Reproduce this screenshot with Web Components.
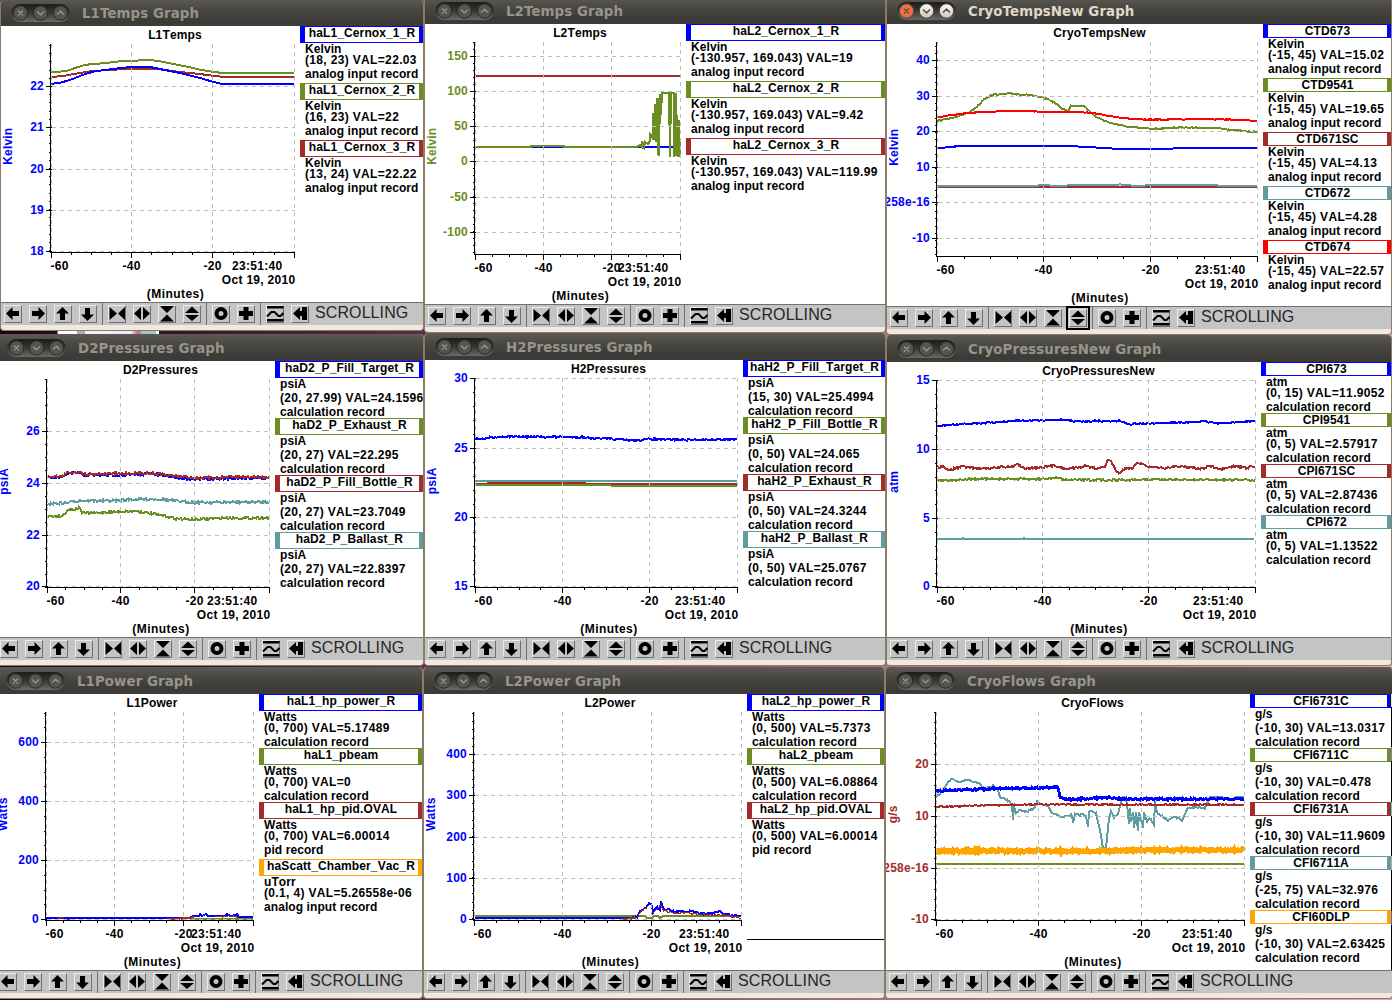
<!DOCTYPE html>
<html lang="en">
<head>
<meta charset="utf-8">
<title>Strip charts</title>
<style>
  html, body {
    margin: 0;
    height: 1000px;
    overflow: hidden;
    font: bold 12px "Liberation Sans", Arial, sans-serif;
    font-kerning: none;
    color: #000;
  }
</style>
</head>
<body>
<graph-desktop></graph-desktop>

<script>
// window buttons in the title bar
const controlsTmpl = document.createElement("template");
controlsTmpl.innerHTML = `
  <style>
    :host { display: block; width: 59px; height: 18px; }
    svg { display: block; }
    .c { fill: #55544e; stroke: #2b2a27; }
    .g { fill: none; stroke: #98968c; stroke-width: 1.3; }
    :host([active]) .c { fill: url(#lit); stroke: #4a4843; }
    :host([active]) .c.x { fill: #f0703f; }
    :host([active]) .g { stroke: #55534c; stroke-width: 1.6; }
  </style>
  <svg width="59" height="18" viewBox="0 0 59 18">
    <defs>
      <linearGradient id="pill" x1="0" y1="0" x2="0" y2="1">
        <stop offset="0" stop-color="#1d1c1a"/>
        <stop offset=".5" stop-color="#393834"/>
        <stop offset="1" stop-color="#6b6a64"/>
      </linearGradient>
      <linearGradient id="lit" x1="0" y1="0" x2="0" y2="1">
        <stop offset="0" stop-color="#fffdf8"/>
        <stop offset="1" stop-color="#c9c5ba"/>
      </linearGradient>
    </defs>
    <rect width="59" height="18" rx="9" fill="url(#pill)"/>
    <circle class="c x" cx="9.5" cy="9" r="7.2"/>
    <circle class="c" cx="29.5" cy="9" r="7.2"/>
    <circle class="c" cx="49.5" cy="9" r="7.2"/>
    <path class="g" d="M7 6.5l5 5M12 6.5l-5 5M26 7.5l3.5 3.3 3.5-3.3M46 10.5l3.5-3.3 3.5 3.3"/>
  </svg>
`;
class WindowControls extends HTMLElement {
  constructor() {
    super();
    this.attachShadow({ mode: "open" }).appendChild(controlsTmpl.content.cloneNode(true));
  }
}
customElements.define("window-controls", WindowControls);

// window frame: title bar, body and tool bar
const windowTmpl = document.createElement("template");
windowTmpl.innerHTML = `
  <style>
    :host {
      position: absolute;
      box-sizing: border-box;
      display: flex;
      flex-direction: column;
      border: solid #8b7b67;
      border-width: 0 1px 1px;
      border-radius: 4px;
      overflow: hidden;
      background: #efe9e0;
    }
    header {
      flex: none;
      display: flex;
      align-items: center;
      height: 27px;
      padding-left: 10px;
      gap: 12px;
      background: linear-gradient(#5b5a53, #4a4944 35%, #3c3b37 80%);
      color: #98948a;
      font: bold 13.33px "DejaVu Sans", sans-serif;
      letter-spacing: .1px;
      white-space: nowrap;
    }
    header span { line-height: 27px; padding-top: 2px; }
    :host([active]) header { color: #dfd8c8; }
    .body { display: flex; background: #fff; overflow: hidden; }
    tool-bar { flex: none; margin-bottom: 5px; }
  </style>
  <header><window-controls></window-controls><span><slot name="title"></slot></span></header>
  <div class="body"><slot></slot></div>
  <tool-bar>SCROLLING</tool-bar>
`;
class GraphWindow extends HTMLElement {
  constructor() {
    super();
    this.attachShadow({ mode: "open" }).appendChild(windowTmpl.content.cloneNode(true));
  }
  connectedCallback() {
    if (this.hasAttribute("active")) {
      this.shadowRoot.querySelector("window-controls").setAttribute("active", "");
    }
    if (this.hasAttribute("focus")) {
      this.shadowRoot.querySelector("tool-bar").setAttribute("focus", this.getAttribute("focus"));
    }
    this.shadowRoot.querySelector(".body").style.height = this.getAttribute("body") + "px";
  }
}

// tool bar
const icons = {
  left: '<path d="M2 8.5L8.500 2v4H15v5H8.500v4z"/>',
  right: '<path d="M16 8.500L9.500 2v4H3v5h6.500v4z"/>',
  up: '<path d="M8.500 2L15 8.500h-4V15H6V8.500H2z"/>',
  down: '<path d="M8.500 16L15 9.500h-4V3H6v6.500H2z"/>',
  shrinkX: '<path d="M1.500 2L9 8.500 1.500 15zM17 2L10 8.500 17 15z"/>',
  growX: '<path d="M1 8.500L8 2v13zM17 8.500L10 2v13z"/>',
  shrinkY: '<path d="M2 1h14L9 8zM2 16.500h14L9 9.500z"/>',
  growY: '<path d="M9 1.500L16 8H2zM9 16L16 10H2z"/>',
  ring: '<circle cx="9" cy="8.500" r="4.500" fill="none" stroke="#000" stroke-width="4"/>',
  plus: '<path d="M6.500 2h5v4H16v5h-4.500v4h-5v-4H2V6h4.500z"/>',
  wave: '<path d="M1 1h16.500v2.500H1zM1 14h16.500v2.500H1z"/><path d="M1 11.500L5.500 7h3l4 4h2L17.500 8" fill="none" stroke="#000" stroke-width="2"/>',
  end: '<path d="M2 8.500L9 2v4h2V2h5v13h-5v-4H9v4z"/>'
};
class ToolButton extends HTMLElement {
  constructor() {
    super();
    this.attachShadow({ mode: "open" });
  }
  connectedCallback() {
    this.shadowRoot.innerHTML = `
      <style>
        :host {
          display: block;
          box-sizing: border-box;
          width: 18px;
          height: 18px;
          border: 1px solid;
          border-color: #ececec #707070 #707070 #ececec;
          background: #c4c4c4;
        }
        :host([focused]) { outline: 2px solid #000; outline-offset: 1px; }
        svg { display: block; margin: -1px; }
      </style>
      <svg width="18" height="18" viewBox="0 0 18 18">${icons[this.getAttribute("icon")]}</svg>`;
  }
}
customElements.define("tool-button", ToolButton);

class ToolBar extends HTMLElement {
  static observedAttributes = ["focus"];
  constructor() {
    super();
    const groups = [
      ["left", "right", "up", "down"],
      ["shrinkX", "growX", "shrinkY", "growY"],
      ["ring", "plus"],
      ["wave", "end"]
    ];
    this.attachShadow({ mode: "open" }).innerHTML = `
      <style>
        :host {
          display: flex;
          box-sizing: border-box;
          height: 23px;
          border-top: 1px solid #707070;
          background: #c4c4c4;
          white-space: nowrap;
        }
        .group {
          display: flex;
          gap: 7px;
          padding: 2px 5px 0 4px;
          border-right: 1px solid #707070;
        }
        .group:first-of-type { padding-left: 3px; }
        .group + .group { padding-left: 5px; }
        .group.last { border: 0; padding-right: 6px; }
        .label {
          font: 16px/20px "Liberation Sans", Arial, sans-serif;
          letter-spacing: .1px;
          color: #262626;
        }
      </style>
      ${groups.map((g, i) => `<div class="group${i == 3 ? " last" : ""}">${
        g.map(n => `<tool-button icon="${n}"></tool-button>`).join("")}</div>`).join("")}
      <div class="label"><slot></slot></div>`;
  }
  attributeChangedCallback(name, old, value) {
    this.shadowRoot.querySelector(`[icon=${value}]`).setAttribute("focused", "");
  }
}
customElements.define("tool-bar", ToolBar);
customElements.define("graph-window", GraphWindow);

// one signal of the legend
class PvEntry extends HTMLElement {
  constructor() {
    super();
    this.attachShadow({ mode: "open" });
  }
  connectedCallback() {
    const [name, ...lines] = this.signal;
    // a row is three pixels taller when its text goes below the baseline
    const low = s => /[_gpy(/]/.test(s);
    this.shadowRoot.innerHTML = `
      <style>
        :host { display: block; padding-bottom: 1px; white-space: nowrap; }
        .name {
          box-sizing: border-box;
          border: solid var(--pen);
          border-width: 1px 4px 1px 5px;
          height: 14px;
          line-height: 12px;
          letter-spacing: .12px;
          display: flex;
          justify-content: center;
        }
        .name.low { height: 17px; }
        .line { height: 11px; line-height: 12px; padding-left: 5px; letter-spacing: .08px; }
        .line.low { height: 14px; }
        .line.value { letter-spacing: .34px; }
      </style>
      <div class="name ${low(name) ? "low" : ""}">${name}</div>
      ${lines.map((l, i) => `<div class="line ${low(l) ? "low" : ""} ${i == 1 ? "value" : ""}">${l}</div>`).join("")}`;
  }
}
customElements.define("pv-entry", PvEntry);

class PvLegend extends HTMLElement {
  constructor() {
    super();
    this.attachShadow({ mode: "open" }).innerHTML = `
      <style>
        :host { display: block; flex: 1; min-width: 0; overflow: hidden; }
        .rule { height: 80px; border-bottom: 1px solid #000; display: none; }
        :host([rule]) .rule { display: block; }
        :host([edge]) {
          border-right: 1px solid #000;
          border-image: linear-gradient(#ffff00 14px, #000 14px 54px, #9370db 54px 68px, #000 68px 108px,
            #40e0d0 108px 122px, #000 122px 162px, #d2a0a0 162px 176px, #000 176px 216px, #4169e1 216px 230px, #000 230px) 1;
        }
      </style>
      <slot></slot><div class="rule"></div>`;
  }
}
customElements.define("pv-legend", PvLegend);

// strip chart
let seed = 7;
function rnd() {
  seed = (seed * 16807) % 2147483647;
  return seed / 2147483647 - 0.5;
}
// walk along the key points one pixel at a time, adding the noise
function trace(pts, noise) {
  const p = pts.trim().split(/\s+/).map(s => s.split(",").map(Number));
  if (!noise) return p.map(q => q.join()).join(" ");
  const out = [];
  for (let i = 0; i < p.length - 1; i++) {
    const [x0, y0] = p[i], [x1, y1] = p[i + 1];
    const n = Math.max(1, Math.round(Math.abs(x1 - x0)));
    for (let k = 0; k < n; k++) {
      const y = y0 + (y1 - y0) * k / n + rnd() * noise * 2;
      out.push((x0 + (x1 - x0) * k / n).toFixed(1) + "," + y.toFixed(1));
    }
  }
  out.push(p[p.length - 1].join());
  return out.join(" ");
}

class StripChart extends HTMLElement {
  constructor() {
    super();
    this.attachShadow({ mode: "open" });
  }
  connectedCallback() {
    const c = this.chart;
    const [vx, vy, vw, vh] = c.view;
    const [x0, x1, x2, x3] = c.xs;
    const { top, base } = c;
    let grid = "", axes = "", text = "";

    c.xs.forEach((x, i) => {
      grid += `<path d="M${x} ${top}V${base}"/>`;
      axes += `<path d="M${x} ${base}v5"/>`;
      if (i < 3) {
        for (let k = 1; k < 4; k++) {
          axes += `<path d="M${Math.floor(x + (c.xs[i + 1] - x) * k / 4) + .5} ${base}v2.500"/>`;
        }
      }
    });
    const step = (c.ys[1][1] - c.ys[0][1]) / c.minor;
    for (let y = c.ys[0][1]; y >= top; y -= step) axes += `<path d="M${x0 - 3} ${Math.floor(y) + .5}h2.500"/>`;
    for (let y = c.ys[0][1]; y <= base; y += step) axes += `<path d="M${x0 - 3} ${Math.floor(y) + .5}h2.500"/>`;
    c.ys.forEach(([label, y]) => {
      grid += `<path d="M${x0} ${y}H${x3}"/>`;
      axes += `<path d="M${x0 - 6} ${y}h6"/>`;
      text += `<text class="tick" x="${x0 - 7.5}" y="${y + 3.5}" text-anchor="end" fill="${c.pen}">${label}</text>`;
    });
    const mid = (x0 + x3) / 2 + 2.500;
    const lines = c.traces.map(([pen, pts, noise, w]) =>
      `<polyline points="${trace(pts, noise)}" stroke="${pen}" stroke-width="${w || 2}"/>`).join("");

    this.shadowRoot.innerHTML = `
      <style>
        :host { display: block; flex: none; width: ${vw}px; height: ${vh}px; }
        svg { display: block; overflow: hidden; }
        path, polyline { fill: none; shape-rendering: crispEdges; }
        .grid { stroke: #bebebe; stroke-dasharray: 4 4; }
        .axes { stroke: #000; }
        text { white-space: pre; letter-spacing: .3px; }
        .title { letter-spacing: .15px; }
        .tick { letter-spacing: .25px; }
        .unit { letter-spacing: .2px; }
      </style>
      <svg width="${vw}" height="${vh}" viewBox="${c.view.join(" ")}">
        ${lines}
        <g class="grid">${grid}</g>
        <g class="axes"><path d="M${x0 - 1} ${top}V${base + .5}M${x0 - 1} ${base}H${x3 + .5}"/>${axes}</g>
        ${text}
        <text class="title" x="${mid - .5}" y="${vy + 13}" text-anchor="middle">${c.title}</text>
        <text x="${x0 - 1}" y="${base + 17.5}">-60</text>
        <text x="${x1}" y="${base + 17.5}" text-anchor="middle">-40</text>
        <text x="${x2}" y="${base + 17.5}" text-anchor="middle">-20</text>
        <text x="${x3 - 12}" y="${base + 17.5}" text-anchor="end">23:51:40</text>
        <text x="${x3 + 1}" y="${base + 31.5}" text-anchor="end">Oct 19, 2010</text>
        <text x="${mid}" y="${base + 45.5}" text-anchor="middle" style="letter-spacing:.45px">(Minutes)</text>
        <text class="unit" transform="translate(${vx + 11} ${(top + base) / 2 - 2}) rotate(-90)" text-anchor="middle" fill="${c.pen}">${c.unit}</text>
      </svg>`;
  }
}
customElements.define("strip-chart", StripChart);

// data
const BLUE = "#0000ff", GREEN = "#6b8e23", BROWN = "#a52a2a", TEAL = "#5f9ea0", RED = "#ff0000", ORANGE = "#ffa500";
const AI = "analog input record", CALC = "calculation record";

const graphs = [
  {
    title: "L1Temps", box: [0, -1, 424], body: 276, split: 300, unit: "Kelvin", pen: BLUE,
    xs: [51.5, 131.5, 212.5, 294.5], top: 44, base: 252.5, minor: 5,
    ys: [["22", 86.5], ["21", 127.5], ["20", 169.5], ["19", 210.5], ["18", 251.5]],
    traces: [
      [GREEN, "51,72.3 67,71 75,68 85,65 92,64 103,63.3 120,61.3 131,60.7 145,60.3 150,60 160,61.3 170,63.3 180,65.3 190,67.3 200,69.7 210,71.3 222,73 294,73"],
      [BROWN, "51,77 63,76 78,73.3 92,71 105,70.3 120,69.3 131,68.7 155,68.7 170,70.7 180,72 190,73 200,74 212,75.7 225,77 294,77"],
      [BLUE, "51,84 60,82.7 70,80 75,78 85,74 95,71.3 105,70 115,68.7 131,67 150,67 160,69 170,71 180,73 190,75.5 200,78 210,81 222,84 294,84"]
    ],
    signals: [
      [BLUE, "haL1_Cernox_1_R", "Kelvin", "(18, 23) VAL=22.03", AI],
      [GREEN, "haL1_Cernox_2_R", "Kelvin", "(16, 23) VAL=22", AI],
      [BROWN, "haL1_Cernox_3_R", "Kelvin", "(13, 24) VAL=22.22", AI]
    ]
  },
  {
    title: "L2Temps", box: [424, -3, 462], body: 280, split: 686, unit: "Kelvin", pen: GREEN,
    xs: [475.5, 543.5, 611.5, 680.5], top: 42, base: 254.5, minor: 5,
    ys: [["150", 56.5], ["100", 91.5], ["50", 126.5], ["0", 161.5], ["-50", 197.5], ["-100", 232.5]],
    traces: [
      [BROWN, "475,76 680,76"],
      [BLUE, "531,147 564,147"],
      [BLUE, "637,147 677,147"],
      [GREEN, "475,147 531,147 531,146 564,146 564,147 637,147 640,145 642,147 642,141 644,147 645,142 648,144 650,141 650,134 652,136 653,140 653,113 654,140 655,104 656,142 657,98 658,155 659,98 659,156 660,94 661,115 662,93 669,93 670,157 671,93 674,93 674,157 676,93 676,156 677,115 678,157 679,120 680,157"]
    ],
    signals: [
      [BLUE, "haL2_Cernox_1_R", "Kelvin", "(-130.957, 169.043) VAL=19", AI],
      [GREEN, "haL2_Cernox_2_R", "Kelvin", "(-130.957, 169.043) VAL=9.42", AI],
      [BROWN, "haL2_Cernox_3_R", "Kelvin", "(-130.957, 169.043) VAL=119.99", AI]
    ]
  },
  {
    title: "CryoTempsNew", box: [886, -3, 506], body: 282, split: 1263, unit: "Kelvin", pen: BLUE, active: true, focus: "growY",
    xs: [937.5, 1043.5, 1150.5, 1257.5], top: 42, base: 256.5, minor: 5,
    ys: [["40", 60.5], ["30", 96.5], ["20", 131.5], ["10", 167.5], ["258e-16", 202.5], ["-10", 238.5]],
    traces: [
      [BLUE, "937,148 950,147 960,146 1065,146 1090,147 1120,149 1160,149 1175,148.500 1190,148 1257,148", .25],
      [GREEN, "937,121 950,118.5 962,115.3 970,112 978,105.7 984,99 990,96 995,94.3 1005,94 1009,93 1015,94.3 1030,95 1040,97.3 1048,99 1055,103 1062,108.7 1068,111 1071,105.7 1080,106 1085,106.3 1089,111 1095,116 1105,121 1115,124 1125,126.3 1140,128 1155,128.7 1180,127.3 1215,128 1235,130 1250,131.7 1257,132", .5],
      [BROWN, "937,187 1257,187"],
      [TEAL, "937,186 1038,186 1039,185 1060,186 1075,185 1118,185 1120,184 1122,185 1140,186 1150,185 1215,185 1220,186 1257,186"],
      [RED, "937,117.3 950,115.3 965,113.3 980,112 1005,111 1025,111 1050,112 1085,112.3 1100,114.3 1115,117 1130,118.7 1150,119.7 1175,119.3 1210,119.3 1240,119.7 1257,121", .25]
    ],
    signals: [
      [BLUE, "CTD673", "Kelvin", "(-15, 45) VAL=15.02", AI],
      [GREEN, "CTD9541", "Kelvin", "(-15, 45) VAL=19.65", AI],
      [BROWN, "CTD671SC", "Kelvin", "(-15, 45) VAL=4.13", AI],
      [TEAL, "CTD672", "Kelvin", "(-15, 45) VAL=4.28", AI],
      [RED, "CTD674", "Kelvin", "(-15, 45) VAL=22.57", AI]
    ]
  },
  {
    title: "D2Pressures", box: [-4, 334, 428], body: 276, split: 275, unit: "psiA", pen: BLUE,
    xs: [47.5, 120.5, 194.5, 269.5], top: 379, base: 587.5, minor: 4,
    ys: [["26", 431.5], ["24", 483.5], ["22", 535.5], ["20", 586.5]],
    traces: [
      [TEAL, "47,504 65,503 75,501 85,500.5 110,501 130,499.5 160,499 180,501.5 200,502.5 269,502", 1.3],
      [GREEN, "47,516.5 62,516 68,510 78,508.5 80,507 82,513 95,513 110,512 135,511 145,512.5 160,515 175,518.5 195,519.7 220,518 269,517.7", 1.1],
      [BLUE, "47,477.500 62,477.500 67,474 75,473 80,472.5 82,475 120,475 150,474 160,475 175,477.2 195,479 215,479 240,478 269,478", 1.3],
      [BROWN, "47,476.500 62,476.500 67,473 75,472 80,471.5 82,474 120,473.5 150,473.2 160,474 175,476.2 195,477.8 215,477.8 240,476.8 269,477", 1.2]
    ],
    signals: [
      [BLUE, "haD2_P_Fill_Target_R", "psiA", "(20, 27.99) VAL=24.1596", CALC],
      [GREEN, "haD2_P_Exhaust_R", "psiA", "(20, 27) VAL=22.295", CALC],
      [BROWN, "haD2_P_Fill_Bottle_R", "psiA", "(20, 27) VAL=23.7049", CALC],
      [TEAL, "haD2_P_Ballast_R", "psiA", "(20, 27) VAL=22.8397", CALC]
    ]
  },
  {
    title: "H2Pressures", box: [424, 333, 462], body: 277, split: 743, unit: "psiA", pen: BLUE,
    xs: [475.5, 562.5, 649.5, 737.5], top: 378, base: 587.5, minor: 5,
    ys: [["30", 378.5], ["25", 448.5], ["20", 517.5], ["15", 586.5]],
    traces: [
      [BLUE, "475,439 485,438.7 490,437.3 505,436.7 580,437 595,438.3 620,439.5 635,440.5 650,439 680,440 700,439.5 737,439.5", .9],
      [BROWN, "475,484 487,484 488,483 585,483 586,484 737,484", .3],
      [GREEN, "475,485 610,485 612,486 737,486"],
      [TEAL, "475,481 650,481"],
      [TEAL, "650,481 737,481", .5]
    ],
    signals: [
      [BLUE, "haH2_P_Fill_Target_R", "psiA", "(15, 30) VAL=25.4994", CALC],
      [GREEN, "haH2_P_Fill_Bottle_R", "psiA", "(0, 50) VAL=24.065", CALC],
      [BROWN, "haH2_P_Exhaust_R", "psiA", "(0, 50) VAL=24.3244", CALC],
      [TEAL, "haH2_P_Ballast_R", "psiA", "(0, 50) VAL=25.0767", CALC]
    ]
  },
  {
    title: "CryoPressuresNew", box: [886, 335, 506], body: 275, split: 1261, unit: "atm", pen: BLUE,
    xs: [937.5, 1042.5, 1148.5, 1255.5], top: 380, base: 587.5, minor: 5,
    ys: [["15", 380.5], ["10", 449.5], ["5", 518.5], ["0", 586.5]],
    traces: [
      [BLUE, "937,426.5 950,425 965,424 990,422.7 1015,421 1040,420.5 1065,419.5 1075,421.5 1095,421 1120,421 1128,424 1150,423.5 1180,422.5 1205,421.5 1218,423.5 1240,422 1255,421", .7],
      [BROWN, "937,467 943,467 949,470 962,466.5 975,468 990,469 1000,466.5 1010,467.5 1018,464.5 1025,468 1035,468 1045,467 1055,465.5 1065,468.5 1075,468 1085,466 1095,468 1105,467 1108,460.5 1111,461 1116,471 1119,473 1125,469 1133,468 1137,462 1145,465 1150,467 1165,468 1175,466.5 1190,467 1200,469 1210,466 1220,470 1235,466 1245,468 1255,466.5", 1],
      [GREEN, "937,480 960,480 970,479 1045,479 1055,477.5 1065,480 1090,480 1110,480 1150,479.500 1255,480", .9],
      [TEAL, "937,539 962,539 963,538 964,539 1023,539 1024,538 1025,539 1254,539"]
    ],
    signals: [
      [BLUE, "CPI673", "atm", "(0, 15) VAL=11.9052", CALC],
      [GREEN, "CPI9541", "atm", "(0, 5) VAL=2.57917", CALC],
      [BROWN, "CPI671SC", "atm", "(0, 5) VAL=2.87436", CALC],
      [TEAL, "CPI672", "atm", "(0, 5) VAL=1.13522", CALC]
    ]
  },
  {
    title: "L1Power", box: [-5, 667, 428], body: 276, split: 259, unit: "Watts", pen: BLUE,
    xs: [46.5, 114.5, 183.5, 253.5], top: 712, base: 920.5, minor: 4,
    ys: [["600", 742.5], ["400", 801.5], ["200", 860.5], ["0", 919.5]],
    traces: [
      [GREEN, "190,919 253,919"],
      [BLUE, "46,918 190,918 193,916 199,916 200,914 202,916 206,914 208,916 225,916 227,914 230,916 236,915 237,914 239,917 253,917"],
      [BROWN, "167,919 190,918 194,917", .5],
      [BROWN, "215,917 228,916 238,917", .8, 1],
      [BROWN, "57,919 62,917 64,919 70,919", 0, 1]
    ],
    signals: [
      [BLUE, "haL1_hp_power_R", "Watts", "(0, 700) VAL=5.17489", CALC],
      [GREEN, "haL1_pbeam", "Watts", "(0, 700) VAL=0", CALC],
      [BROWN, "haL1_hp_pid.OVAL", "Watts", "(0, 700) VAL=6.00014", "pid record"],
      [ORANGE, "haScatt_Chamber_Vac_R", "uTorr", "(0.1, 4) VAL=5.26558e-06", AI]
    ]
  },
  {
    title: "L2Power", box: [423, 667, 462], body: 276, split: 747, unit: "Watts", pen: BLUE, rule: true,
    xs: [474.5, 562.5, 651.5, 741.5], top: 712, base: 920.5, minor: 5,
    ys: [["400", 754.5], ["300", 795.5], ["200", 837.5], ["100", 878.5], ["0", 919.5]],
    traces: [
      [BLUE, "475,918 630,918"],
      [GREEN, "475,916 645,916 647,918 652,918 654,916 658,916 660,918 663,916 741,916"],
      [BLUE, "630,918 637,917 641,910 645,909 649,903 652,906 653,912 657,907 660,910 661,902 664,910 668,909 675,912 681,911 685,912 692,911 700,914 715,913 718,911 725,914 733,916 741,916", .9],
      [BROWN, "622,919 636,918"],
      [BROWN, "637,917 641,911 645,909 649,905", .5, 1],
      [BROWN, "653,913 657,909 661,905 664,912", .5, 1],
      [BROWN, "664,911 675,913 681,913 700,914 720,915 741,918", 1.2, 1]
    ],
    signals: [
      [BLUE, "haL2_hp_power_R", "Watts", "(0, 500) VAL=5.7373", CALC],
      [GREEN, "haL2_pbeam", "Watts", "(0, 500) VAL=6.08864", CALC],
      [BROWN, "haL2_hp_pid.OVAL", "Watts", "(0, 500) VAL=6.00014", "pid record"]
    ]
  },
  {
    title: "CryoFlows", box: [885, 667, 508], body: 276, split: 1250, unit: "g/s", pen: BROWN, edge: true,
    xs: [936.5, 1038.5, 1141.5, 1244.5], top: 712, base: 920.5, minor: 5,
    ys: [["20", 764.5], ["10", 816.5], ["258e-16", 868.5], ["-10", 919.5]],
    traces: [
      [TEAL, "936,798 943,790 948,782 952,779 960,782 968,780 978,783 985,789 990,787 993,786 998,790 1000,797 1007,800 1012,804 1013,820 1014,806 1016,812 1020,810 1027,812 1035,807 1037,802 1042,805 1048,806 1052,813 1062,817 1072,815 1073,823 1075,814 1080,815 1082,814 1086,816 1088,826 1089,812 1092,811 1096,813 1100,830 1103,848 1106,848 1109,818 1111,811 1114,818 1118,814 1120,807 1122,799 1124,796 1127,804 1129,824 1130,808 1131,822 1133,812 1134,828 1136,812 1138,831 1139,812 1141,820 1143,828 1144,813 1147,822 1150,818 1154,825 1155,801 1157,812 1160,815 1168,820 1175,817 1182,820 1188,808 1195,807 1205,808 1210,797 1222,797 1230,800 1236,797 1244,797", .8],
      [BROWN, "936,807 965,806 1000,805 1050,804.5 1244,804.7", .6],
      [BLUE, "936,791 960,790 1000,788.5 1058,787.5 1060,797 1070,799.500 1085,798.5 1110,797.5 1120,799 1244,799", .9, 3],
      [ORANGE, "936,851 1100,851 1150,850 1244,850", 1.2, 5],
      [GREEN, "936,864 1244,864"]
    ],
    signals: [
      [BLUE, "CFI6731C", "g/s", "(-10, 30) VAL=13.0317", CALC],
      [GREEN, "CFI6711C", "g/s", "(-10, 30) VAL=0.478", CALC],
      [BROWN, "CFI6731A", "g/s", "(-10, 30) VAL=11.9609", CALC],
      [TEAL, "CFI6711A", "g/s", "(-25, 75) VAL=32.976", CALC],
      [ORANGE, "CFI60DLP", "g/s", "(-10, 30) VAL=2.63425", CALC]
    ]
  }
];

class GraphDesktop extends HTMLElement {
  constructor() {
    super();
    this.attachShadow({ mode: "open" }).innerHTML = `
      <style>
        :host {
          display: block;
          position: relative;
          width: 1392px;
          height: 1000px;
          overflow: hidden;
          background: linear-gradient(90deg, #1c0616, #5b2a4e 30%, #b56c86 64%, #f0a0a6);
        }
        .behind {
          position: absolute;
          left: 57px;
          top: 326px;
          width: 102px;
          height: 10px;
          background: linear-gradient(90deg, #777 1px, #fff 1px 20px, #b9aab0 20px 28px, #f4f0f4 28px 54px, #ecebff 54px 74px, #c07a94 80px 84px, #a9c3cc 84px 99px, #fff 99px);
        }
      </style>
      <div class="behind"></div>`;
  }
  connectedCallback() {
    for (const g of graphs) {
      const [x, y, w] = g.box;
      const win = document.createElement("graph-window");
      win.style.cssText = `left:${x}px;top:${y}px;width:${w}px`;
      win.setAttribute("body", g.body);
      if (g.active) win.setAttribute("active", "");
      if (g.focus) win.setAttribute("focus", g.focus);

      const title = document.createElement("span");
      title.slot = "title";
      title.textContent = g.title + " Graph";

      const chart = document.createElement("strip-chart");
      chart.chart = { ...g, view: [x + 1, y + 27, g.split - x - 1, g.body] };

      const legend = document.createElement("pv-legend");
      if (g.rule) legend.setAttribute("rule", "");
      if (g.edge) legend.setAttribute("edge", "");
      for (const [pen, ...signal] of g.signals) {
        const entry = document.createElement("pv-entry");
        entry.style.setProperty("--pen", pen);
        entry.signal = signal;
        legend.appendChild(entry);
      }
      win.append(title, chart, legend);
      this.shadowRoot.appendChild(win);
    }
  }
}
customElements.define("graph-desktop", GraphDesktop);
</script>
</body>
</html>
